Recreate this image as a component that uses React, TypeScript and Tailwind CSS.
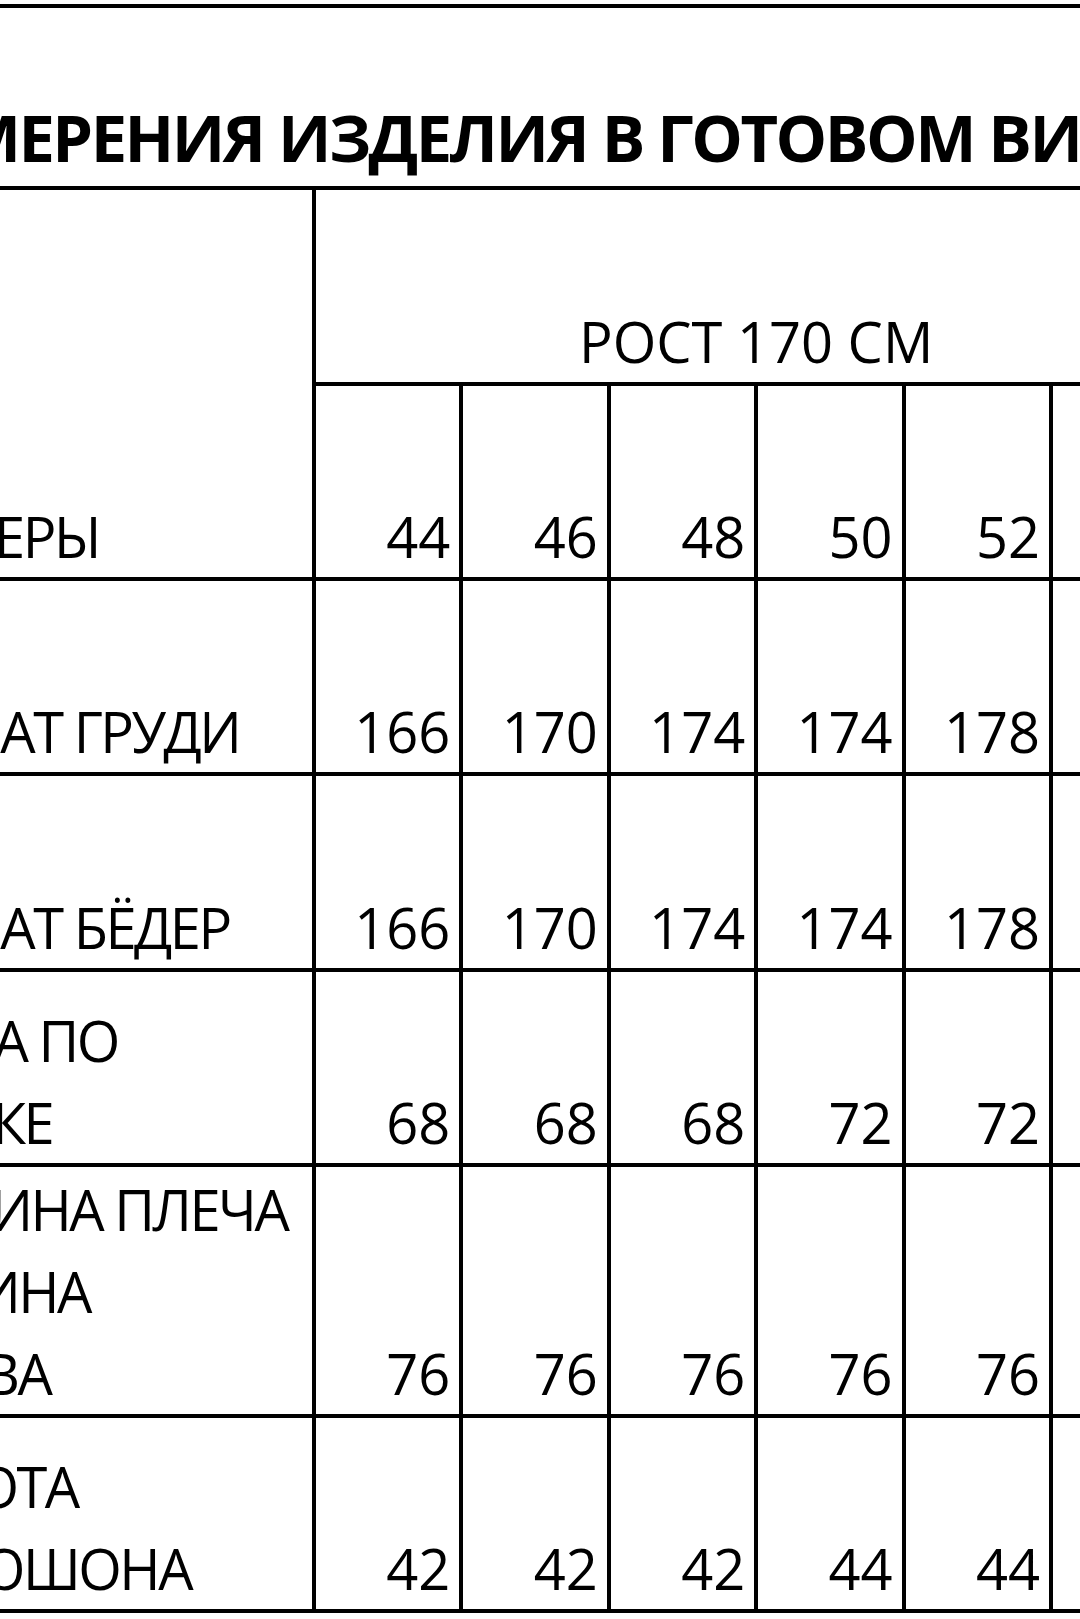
const sizes = ["44", "46", "48", "50", "52", "54"];

interface ILine {
    text: string
    shift?: string // сдвиг строки влево, чтобы обрезка совпадала
}

interface IRow {
    label: ILine[]
    values: string[]
}

const rows: IRow[] = [
    { label: [{ text: "ОБХВАТ ГРУДИ" }], values: ["166", "170", "174", "174", "178", "182"] },
    { label: [{ text: "ОБХВАТ БЁДЕР" }], values: ["166", "170", "174", "174", "178", "182"] },
    {
        label: [
            { text: "ДЛИНА ПО", shift: "ml-[-22px]" },
            { text: "СПИНКЕ", shift: "ml-[-22px]" },
        ],
        values: ["68", "68", "68", "72", "72", "72"]
    },
    {
        label: [
            { text: "ШИРИНА ПЛЕЧА" },
            { text: "+ ДЛИНА" },
            { text: "РУКАВА", shift: "ml-[-8px]" },
        ],
        values: ["76", "76", "76", "76", "76", "76"]
    },
    { label: [{ text: "ВЫСОТА" }, { text: "КАПЮШОНА" }], values: ["42", "42", "42", "44", "44", "44"] },
];

const cell = "bg-white flex flex-col justify-end text-[56px] leading-[82px] whitespace-nowrap";

const App = () => {
    return (
        <div className="w-[1080px] h-[1619px] overflow-hidden bg-white pt-[4px] text-black font-['Open_Sans','Noto_Sans',sans-serif]">
            <div className="ml-[-150px] w-max grid grid-cols-[462px_repeat(6,143.4px)] grid-rows-[178px_192px_191px_191px_192px_191px_247px_191px] gap-[4px] py-[4px] bg-black">
                {/* заголовок */}
                <div className="col-span-7 bg-white flex items-end pb-[4px] pl-[19px] whitespace-nowrap">
                    <span className="text-[65px] font-bold leading-[89px] tracking-[-2.5px]">ИЗМЕРЕНИЯ ИЗДЕЛИЯ В ГОТОВОМ ВИДЕ</span>
                </div>

                <div className={`${cell} row-span-2 pl-[14px] tracking-[-2.5px]`}>
                    <div className="ml-[-12px]">РАЗМЕРЫ</div>
                </div>
                <div className={`${cell} col-span-6 items-center`}>РОСТ 170 СМ</div>
                {sizes.map((s) => (
                    <div key={s} className={`${cell} items-end pr-[9px]`}>{s}</div>
                ))}

                {rows.map((row) => (
                    <>
                        <div key={row.label[0].text} className={`${cell} pl-[14px] tracking-[-2.5px]`}>
                            {row.label.map((l) => <div key={l.text} className={l.shift}>{l.text}</div>)}
                        </div>
                        {row.values.map((v, i) => (
                            <div key={row.label[0].text + i} className={`${cell} items-end pr-[9px]`}>{v}</div>
                        ))}
                    </>
                ))}
            </div>
        </div>
    )
}

export default App;
